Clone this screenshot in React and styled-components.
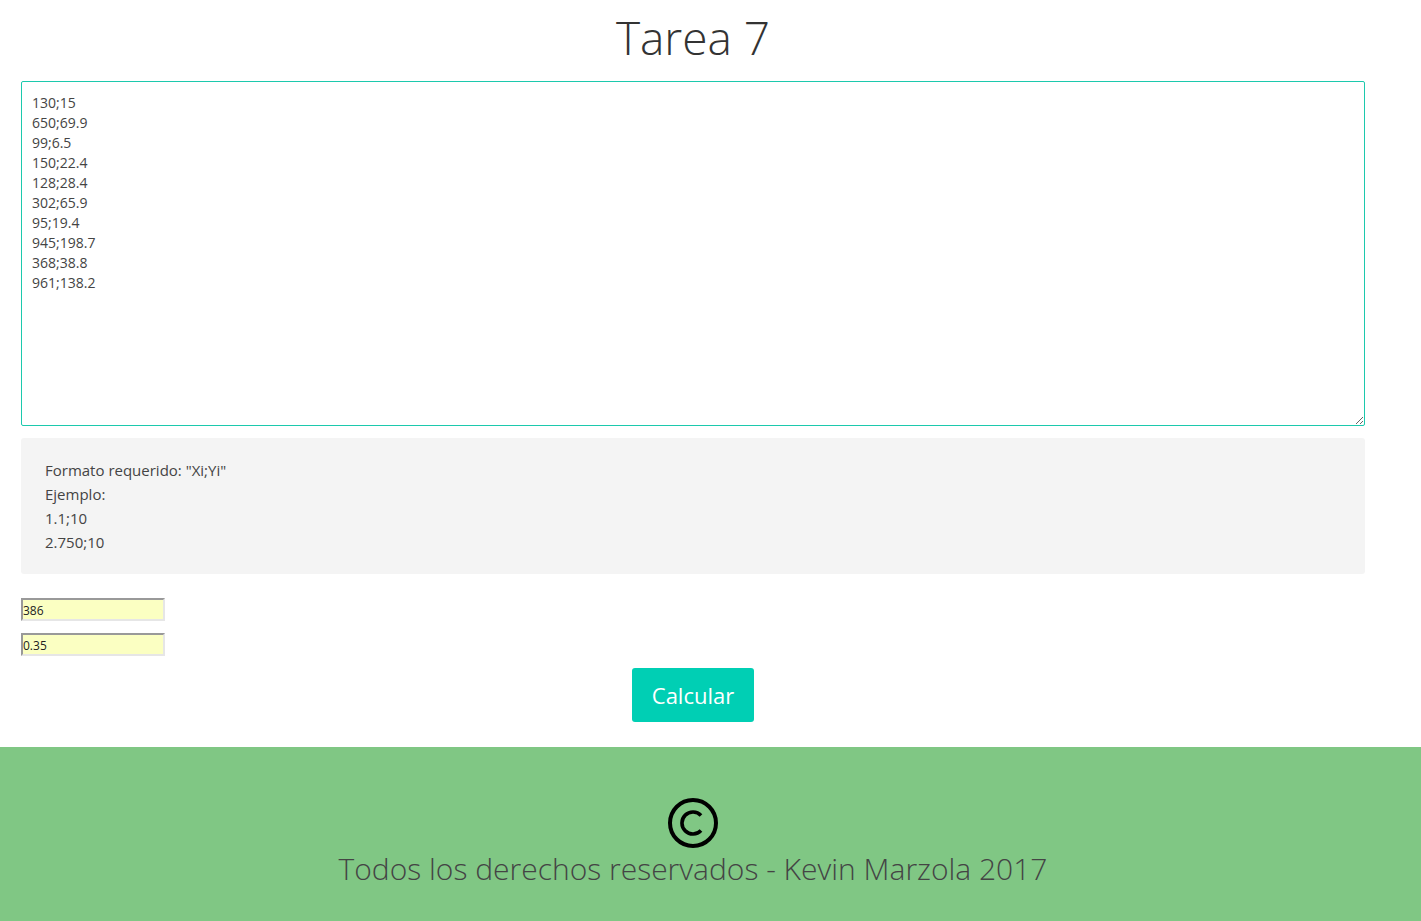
import styled, { createGlobalStyle } from "styled-components";

const GlobalStyle = createGlobalStyle`
  html, body {
    margin: 0;
    padding: 0;
    background: #fff;
    font-family: "Open Sans", "Noto Sans", sans-serif;
    color: #333;
  }
`;

const samples = `130;15
650;69.9
99;6.5
150;22.4
128;28.4
302;65.9
95;19.4
945;198.7
368;38.8
961;138.2`;

const App = () => {
  return (
    <>
      <GlobalStyle />
      <Main>
        <Title>Tarea 7</Title>
        <DataArea defaultValue={samples} />
        <Hint>
          <p>Formato requerido: "Xi;Yi"</p>
          <p>Ejemplo:</p>
          <p>1.1;10</p>
          <p>2.750;10</p>
        </Hint>
        <Fields>
          <SmallInput defaultValue="386" />
          <SmallInput defaultValue="0.35" />
        </Fields>
        <Actions>
          <CalcButton>Calcular</CalcButton>
        </Actions>
      </Main>
      <Footer>
        <FooterInner>
          {/* copyright mark */}
          <svg width="52" height="52" viewBox="0 0 52 52">
            <circle cx="26" cy="26" r="23" fill="none" stroke="#000" strokeWidth="4" />
            <path
              d="M34 18.5 A11 11 0 1 0 34 33.5"
              fill="none"
              stroke="#000"
              strokeWidth="3.6"
            />
          </svg>
          <FooterText>Todos los derechos reservados - Kevin Marzola 2017</FooterText>
        </FooterInner>
      </Footer>
    </>
  );
};

const Main = styled.main`
  padding: 0 56px 25px 21px;
  display: flex;
  flex-direction: column;
`;

const Title = styled.h1`
  margin: 7px 0 14px;
  text-align: center;
  font-weight: 300;
  font-size: 46px;
  line-height: 60px;
  color: #333;
`;

const DataArea = styled.textarea`
  box-sizing: border-box;
  width: 100%;
  height: 345px;
  padding: 11px 10px 10px;
  border: 1px solid #1cc9ad;
  border-radius: 2px;
  font-family: "Open Sans", "Noto Sans", sans-serif;
  font-size: 14px;
  line-height: 20px;
  color: #444;
  outline: none;
  resize: vertical;
`;

const Hint = styled.div`
  margin-top: 12px;
  background: #f4f4f4;
  border-radius: 3px;
  padding: 20px 24px;
  font-size: 15px;
  line-height: 24px;
  color: #444;

  p {
    margin: 0;
  }
`;

const Fields = styled.div`
  margin-top: 24px;
  display: flex;
  flex-direction: column;
  gap: 12px;
`;

const SmallInput = styled.input`
  box-sizing: border-box;
  width: 144px;
  height: 23px;
  padding: 1px 0 0;
  background: #fbffc2;
  border: 2px solid #e6e6e6;
  border-top-color: #999;
  border-left-color: #999;
  font-family: "Open Sans", "Noto Sans", sans-serif;
  font-size: 12px;
  color: #222;
  outline: none;
`;

const Actions = styled.div`
  margin-top: 12px;
  display: flex;
  justify-content: center;
`;

const CalcButton = styled.button`
  width: 122px;
  height: 54px;
  background: #00cfb4;
  border: none;
  border-radius: 3px;
  color: #fff;
  font-family: "Open Sans", "Noto Sans", sans-serif;
  font-size: 22px;
  cursor: pointer;
`;

const Footer = styled.footer`
  background: #80c784;
  height: 174px;
  padding: 50px 56px 0 21px;
  box-sizing: border-box;
`;

const FooterInner = styled.div`
  display: flex;
  flex-direction: column;
  align-items: center;
`;

const FooterText = styled.p`
  margin: 0;
  font-weight: 300;
  font-size: 30px;
  line-height: 40px;
  color: #444;
`;

export default App;
